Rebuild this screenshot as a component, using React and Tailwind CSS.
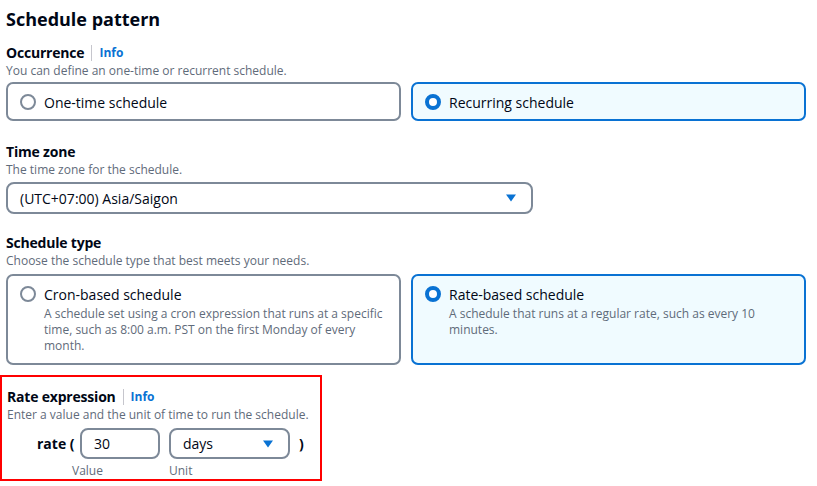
const font = { fontFamily: '"Open Sans", "Noto Sans", Arial, sans-serif' };

const Caret = () => (
  <svg width="12" height="8" viewBox="0 0 12 8" className="flex-shrink-0">
    <path d="M1 0.5h10L6 7.5z" fill="#0972d3" />
  </svg>
);

const Radio = ({ checked }) =>
  checked ? (
    <span className="w-[16px] h-[16px] rounded-full border-[4px] border-[#0972d3] bg-white flex-shrink-0" />
  ) : (
    <span className="w-[16px] h-[16px] rounded-full border-2 border-[#7d8998] bg-white flex-shrink-0" />
  );

const Label = ({ children, info }) => (
  <div className="flex items-center text-[14px] font-bold text-[#000716] leading-[18px] tracking-[-0.2px]">
    <span>{children}</span>
    {info && (
      <>
        <span className="mx-[7px] w-px h-[16px] bg-[#c6c6cd]" />
        <span className="text-[12px] text-[#0972d3] tracking-normal">Info</span>
      </>
    )}
  </div>
);

const Desc = ({ children }) => (
  <div className="text-[12px] text-[#5f6b7a] leading-[16px] mt-[1px]">{children}</div>
);

const Tile = ({ checked, title, desc }) => (
  <div
    className={`flex-1 rounded-[7px] border-2 pl-[12px] pr-[13px] pt-[9px] pb-[9px] ${
      checked ? 'border-[#0972d3] bg-[#f0fbff]' : 'border-[#7d8998] bg-white'
    }`}
  >
    <div className="flex items-center gap-[8px] h-[16px] mt-[1px]">
      <Radio checked={checked} />
      <span className="text-[14px] text-[#000716]">{title}</span>
    </div>
    {desc && (
      <div className="pl-[24px] mt-[4px] text-[12px] leading-[16px] text-[#5f6b7a]">{desc}</div>
    )}
  </div>
);

export default function App() {
  return (
    <div className="w-[817px] h-[486px] bg-white overflow-hidden" style={font}>
      <div className="pl-[6px] pr-[11px] pt-[6px]">
        <h2 className="text-[18px] font-bold text-[#000716] leading-[26px]">Schedule pattern</h2>

        <div className="mt-[12px]">
          <Label info>Occurrence</Label>
          <Desc>You can define an one-time or recurrent schedule.</Desc>
          <div className="flex gap-[10px] mt-[3px]">
            <Tile title="One-time schedule" />
            <Tile checked title="Recurring schedule" />
          </div>
        </div>

        <div className="mt-[22px]">
          <Label>Time zone</Label>
          <Desc>The time zone for the schedule.</Desc>
          <div className="mt-[4px] w-[527px] h-[32px] rounded-[8px] border-2 border-[#7d8998] flex items-center justify-between pl-[12px] pr-[14px]">
            <span className="text-[14px] text-[#000716]">(UTC+07:00) Asia/Saigon</span>
            <Caret />
          </div>
        </div>

        <div className="mt-[20px]">
          <Label>Schedule type</Label>
          <Desc>Choose the schedule type that best meets your needs.</Desc>
          <div className="flex gap-[10px] mt-[5px] h-[91px]">
            <Tile
              title="Cron-based schedule"
              desc="A schedule set using a cron expression that runs at a specific time, such as 8:00 a.m. PST on the first Monday of every month."
            />
            <Tile
              checked
              title="Rate-based schedule"
              desc="A schedule that runs at a regular rate, such as every 10 minutes."
            />
          </div>
        </div>
      </div>

      <div className="mt-[10px] w-[322px] h-[106px] border-2 border-[#ff0000] pl-[5px] pt-[11px]">
        <Label info>Rate expression</Label>
        <Desc>Enter a value and the unit of time to run the schedule.</Desc>
        <div className="flex items-center mt-[5px] pl-[30px]">
          <span className="text-[14px] font-bold text-[#000716] w-[43px]">rate (</span>
          <div className="w-[80px] h-[31px] rounded-[8px] border-2 border-[#7d8998] flex items-center px-[12px] text-[14px] text-[#000716]">
            30
          </div>
          <div className="ml-[9px] w-[121px] h-[31px] rounded-[8px] border-2 border-[#7d8998] flex items-center justify-between pl-[12px] pr-[14px] text-[14px] text-[#000716]">
            <span>days</span>
            <Caret />
          </div>
          <span className="ml-[9px] text-[14px] font-bold text-[#000716]">)</span>
        </div>
        <div className="flex text-[12px] text-[#5f6b7a] mt-[4px] leading-[16px]">
          <span className="ml-[65px] w-[97px]">Value</span>
          <span>Unit</span>
        </div>
      </div>
    </div>
  );
}
